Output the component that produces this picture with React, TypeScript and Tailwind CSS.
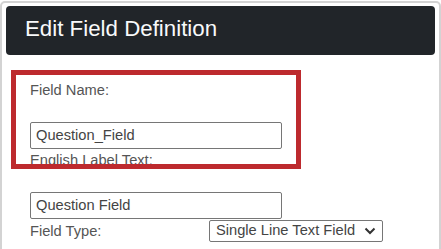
import React from 'react';

const font = { fontFamily: '"Liberation Sans", Arial, sans-serif' };

const TextBox = ({ value }: { value: string }) => (
    <div className="h-[27px] w-[252px] border border-[#767676] rounded-[2px] flex items-center pl-[5px] text-[14.67px] text-[#444]">
        {value}
    </div>
);

const App = () => {
    return (
        <div className="w-[441px] h-[249px] overflow-hidden bg-white" style={font}>
            <div className="relative mt-px w-[441px] h-[270px] border-2 border-[#d3d3d3] rounded-[5px] px-[4px] pt-[3px]">
                {/* Header */}
                <div className="h-[49px] bg-[#212529] rounded-[4px] flex items-center pl-[19px] pb-[3px]">
                    <h1 className="text-[22.3px] text-[#f8f9fa] leading-none">Edit Field Definition</h1>
                </div>

                {/* Form */}
                <div className="pl-[24px] pt-[27px] text-[14.67px] text-[#555] leading-[17px]">
                    <div>Field Name:</div>
                    <div className="mt-[23px]">
                        <TextBox value="Question_Field" />
                    </div>
                    <div className="mt-[3px]">English Label Text:</div>
                    <div className="mt-[23px]">
                        <TextBox value="Question Field" />
                    </div>
                    <div className="flex items-center h-[23px]">
                        <div className="w-[179px] pt-[2px]">Field Type:</div>
                        <div className="h-[22px] w-[174px] border border-[#767676] rounded-[2px] flex items-center justify-between pl-[6px] pr-[6px] text-[#444]">
                            <span>Single Line Text Field</span>
                            <svg width="12" height="8" viewBox="0 0 12 8" fill="none">
                                <path d="M1.5 1.5 L6 6 L10.5 1.5" stroke="#333" strokeWidth="2" />
                            </svg>
                        </div>
                    </div>
                </div>

                {/* Highlight box */}
                <div className="absolute left-[9px] top-[67px] w-[290px] h-[99px] border-[5px] border-[#bd2a2e]" />
            </div>
        </div>
    );
};

export default App;
